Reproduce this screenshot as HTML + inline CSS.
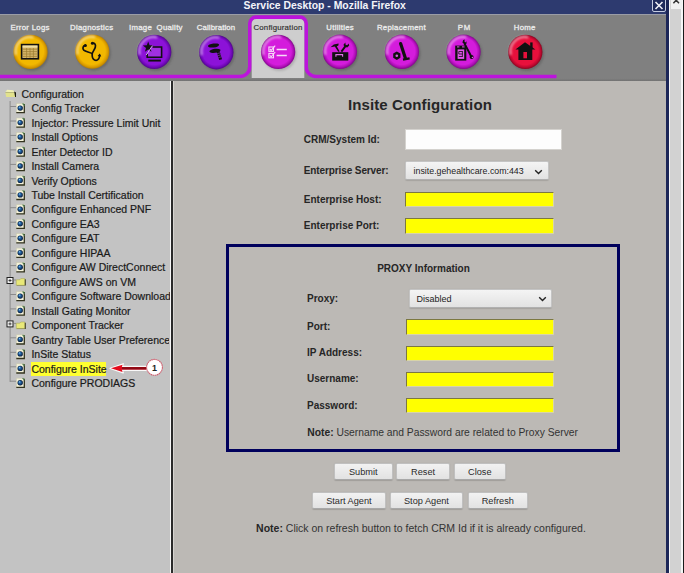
<!DOCTYPE html>
<html><head><meta charset="utf-8">
<style>
*{margin:0;padding:0;box-sizing:border-box}
html,body{width:684px;height:573px;overflow:hidden;background:#bcb9b5;font-family:"Liberation Sans",sans-serif}
.a{position:absolute}
#title{left:0;top:0;width:670px;height:14px;background:#2d3a6f}
#title span{position:absolute;left:243.6px;top:0px;font-size:10.4px;font-weight:700;color:#f4f4fa;white-space:nowrap;line-height:12px}
#xbtn{left:652px;top:-3px;width:14px;height:15px;border:1.6px solid #c4cbe0;border-radius:2px;background:#1e2a5c}
#rborder{left:666px;top:0;width:3px;height:573px;background:#1c2658}
#sb{left:669px;top:0;width:15px;height:573px;background:linear-gradient(90deg,#f6f6f6 0,#f6f6f6 1.5px,#d2d2d2 1.5px,#d2d2d2 12.5px,#f6f6f6 12.5px,#f6f6f6 14px,#1a1a1a 14px)}
#sbtop{left:670.5px;top:0;width:11px;height:9px;background:#f0f0f0}
#toolbar{left:0;top:14px;width:666px;height:67px;background:#808080}
#tbline{left:0;top:13.5px;width:666px;height:1.5px;background:#9a9ca6}
#band{left:0;top:78px;width:666px;height:3px;background:linear-gradient(#828282,#727272)}
#left{left:0;top:81px;width:170px;height:492px;background:#c3c3c3}
#sep1{left:170px;top:81px;width:1px;height:492px;background:#f6f6f6}
#sep2{left:171px;top:81px;width:2px;height:492px;background:#2a2a2a}
#sep3{left:173px;top:81px;width:1px;height:492px;background:#d6d4d0}
#main{left:174px;top:81px;width:492px;height:492px;background:#bcb9b5}
.tl{position:absolute;width:80px;text-align:center;font-size:7.8px;font-weight:400;color:#f2f2f2;white-space:nowrap;line-height:10px;letter-spacing:0.28px;-webkit-text-stroke:0.3px #e8e8e8}
.tree{position:absolute;left:31.4px;font-size:10.5px;color:#1a1a1a;white-space:nowrap;line-height:12px;-webkit-text-stroke:0.2px #1a1a1a}
.lbl{position:absolute;font-size:10px;font-weight:700;color:#262626;white-space:nowrap;line-height:12px}
.yel{position:absolute;background:#ffff00;border-top:1px solid #7c7840;border-left:1px solid #7c7840;border-bottom:1px solid #d8d4a8;border-right:1px solid #d8d4a8}
.btn{position:absolute;height:17.4px;background:linear-gradient(#f2f2f2,#e2e2e2);border:1px solid #c0c0c0;border-bottom-color:#a8a8a8;border-radius:2px;font-size:9.2px;color:#2a2a2a;text-align:center;line-height:17px;white-space:nowrap;box-shadow:0 0.5px 1px rgba(0,0,0,0.15)}
.sel{position:absolute;background:linear-gradient(#f4f4f4,#e2e2e2);border:1px solid #c4c4c4;border-bottom-color:#b0b0b0;border-radius:2px;font-size:9px;color:#222;white-space:nowrap;box-shadow:0 0.5px 1px rgba(0,0,0,0.12)}
</style></head><body>
<div class="a" id="title"><span>Service Desktop - Mozilla Firefox</span></div>
<div class="a" id="xbtn"><svg width="12" height="12" style="position:absolute;left:-0.5px;top:1px" viewBox="0 0 12 12"><path d="M2.5 3 L9.5 10 M9.5 3 L2.5 10" stroke="#f0f0f8" stroke-width="1.6"/></svg></div>
<div class="a" id="rborder"></div>
<div class="a" id="sb"></div>
<div class="a" id="sbtop"><svg width="11" height="9" viewBox="0 0 11 9" style="display:block"><path d="M2.4 3.2 L5.2 0.2 L8 3.2" fill="none" stroke="#333" stroke-width="1.5"/></svg></div>

<div class="a" id="toolbar"></div>
<div class="a" id="tbline"></div>
<div class="a" id="band"></div>

<!-- toolbar svg -->
<svg class="a" style="left:0;top:0" width="666" height="81" viewBox="0 0 666 81">
<defs>
<radialGradient id="gy" cx="0.5" cy="0.5" r="0.5" fx="0.45" fy="0.42"><stop offset="0" stop-color="#f2b800"/><stop offset="0.78" stop-color="#f2b800"/><stop offset="0.9" stop-color="#dc9e00"/><stop offset="1" stop-color="#b88000"/></radialGradient>
<radialGradient id="gp" cx="0.5" cy="0.5" r="0.5" fx="0.45" fy="0.42"><stop offset="0" stop-color="#8c12d8"/><stop offset="0.78" stop-color="#8c12d8"/><stop offset="0.9" stop-color="#7008b8"/><stop offset="1" stop-color="#50068a"/></radialGradient>
<radialGradient id="gm" cx="0.5" cy="0.5" r="0.5" fx="0.45" fy="0.42"><stop offset="0" stop-color="#d41cdc"/><stop offset="0.78" stop-color="#d41cdc"/><stop offset="0.9" stop-color="#b010b8"/><stop offset="1" stop-color="#80088a"/></radialGradient>
<radialGradient id="gr" cx="0.5" cy="0.5" r="0.5" fx="0.45" fy="0.42"><stop offset="0" stop-color="#e8103c"/><stop offset="0.78" stop-color="#e8103c"/><stop offset="0.9" stop-color="#c00830"/><stop offset="1" stop-color="#880620"/></radialGradient>
<linearGradient id="hl" x1="0" y1="0" x2="1" y2="1"><stop offset="0" stop-color="#fff" stop-opacity="0.85"/><stop offset="0.45" stop-color="#fff" stop-opacity="0"/></linearGradient>
<filter id="blur" x="-30%" y="-30%" width="160%" height="160%"><feGaussianBlur stdDeviation="1.3"/></filter>
<filter id="blur2" x="-30%" y="-30%" width="160%" height="160%"><feGaussianBlur stdDeviation="0.9"/></filter>
</defs>
<path d="M0 74.8 H240 a8 8 0 0 0 8 -8 V23.3 a8 8 0 0 1 8 -8 H300 a8 8 0 0 1 8 8 V66.8 a8 8 0 0 0 8 8 H556.5 V78.2 H316 a11.7 11.7 0 0 1 -11.7 -11.7 V23.5 a4.5 4.5 0 0 0 -4.5 -4.5 H256.2 a4.5 4.5 0 0 0 -4.5 4.5 V66.5 a11.7 11.7 0 0 1 -11.7 11.7 H0 Z" fill="#bc14dc"/>
<path d="M251.7 23.5 a4.5 4.5 0 0 1 4.5 -4.5 H299.8 a4.5 4.5 0 0 1 4.5 4.5 V78 H251.7 Z" fill="#cecece"/>
<circle cx="31.9" cy="53.5" r="17.2" fill="#5a5a5a" opacity="0.6" filter="url(#blur)"/>
<circle cx="30.5" cy="51.9" r="17.2" fill="url(#gy)"/>
<path d="M15.9 54.9 A14.6 14.6 0 0 1 33.5 37.3" fill="none" stroke="#fff" stroke-opacity="0.5" stroke-width="2.4" filter="url(#blur2)"/>
<circle cx="93.6" cy="53.2" r="17.2" fill="#5a5a5a" opacity="0.6" filter="url(#blur)"/>
<circle cx="92.2" cy="51.6" r="17.2" fill="url(#gy)"/>
<path d="M77.6 54.6 A14.6 14.6 0 0 1 95.2 37.0" fill="none" stroke="#fff" stroke-opacity="0.5" stroke-width="2.4" filter="url(#blur2)"/>
<circle cx="155.6" cy="53.5" r="17.2" fill="#5a5a5a" opacity="0.6" filter="url(#blur)"/>
<circle cx="154.2" cy="51.9" r="17.2" fill="url(#gp)"/>
<path d="M139.6 54.9 A14.6 14.6 0 0 1 157.2 37.3" fill="none" stroke="#fff" stroke-opacity="0.5" stroke-width="2.4" filter="url(#blur2)"/>
<circle cx="217.7" cy="53.8" r="17.2" fill="#5a5a5a" opacity="0.6" filter="url(#blur)"/>
<circle cx="216.3" cy="52.2" r="17.2" fill="url(#gp)"/>
<path d="M201.7 55.2 A14.6 14.6 0 0 1 219.3 37.6" fill="none" stroke="#fff" stroke-opacity="0.5" stroke-width="2.4" filter="url(#blur2)"/>
<circle cx="279.5" cy="53.5" r="17.2" fill="#9a9a9a" opacity="0.6" filter="url(#blur)"/>
<circle cx="278.1" cy="51.9" r="17.2" fill="url(#gm)"/>
<path d="M263.5 54.9 A14.6 14.6 0 0 1 281.1 37.3" fill="none" stroke="#fff" stroke-opacity="0.5" stroke-width="2.4" filter="url(#blur2)"/>
<circle cx="341.3" cy="53.4" r="17.2" fill="#5a5a5a" opacity="0.6" filter="url(#blur)"/>
<circle cx="339.9" cy="51.8" r="17.2" fill="url(#gm)"/>
<path d="M325.3 54.8 A14.6 14.6 0 0 1 342.9 37.2" fill="none" stroke="#fff" stroke-opacity="0.5" stroke-width="2.4" filter="url(#blur2)"/>
<circle cx="403.3" cy="53.4" r="17.2" fill="#5a5a5a" opacity="0.6" filter="url(#blur)"/>
<circle cx="401.9" cy="51.8" r="17.2" fill="url(#gm)"/>
<path d="M387.3 54.8 A14.6 14.6 0 0 1 404.9 37.2" fill="none" stroke="#fff" stroke-opacity="0.5" stroke-width="2.4" filter="url(#blur2)"/>
<circle cx="464.9" cy="53.4" r="17.2" fill="#5a5a5a" opacity="0.6" filter="url(#blur)"/>
<circle cx="463.5" cy="51.8" r="17.2" fill="url(#gm)"/>
<path d="M448.9 54.8 A14.6 14.6 0 0 1 466.5 37.2" fill="none" stroke="#fff" stroke-opacity="0.5" stroke-width="2.4" filter="url(#blur2)"/>
<circle cx="526.7" cy="53.5" r="17.2" fill="#5a5a5a" opacity="0.6" filter="url(#blur)"/>
<circle cx="525.3" cy="51.9" r="17.2" fill="url(#gr)"/>
<path d="M510.7 54.9 A14.6 14.6 0 0 1 528.3 37.3" fill="none" stroke="#fff" stroke-opacity="0.5" stroke-width="2.4" filter="url(#blur2)"/>
<!-- error logs -->
<rect x="21.6" y="44.6" width="16.8" height="14.2" fill="#d4b468" stroke="#111" stroke-width="1.6"/>
<rect x="22.6" y="45.6" width="14.8" height="2" fill="#eedfa8"/>
<path d="M23 49.2H37M23 51.6H37M23 54H37M23 56.4H37M26.6 48V58M30 48V58M33.4 48V58" stroke="#9c7c30" stroke-width="0.7"/>
<!-- diagnostics stethoscope -->
<path d="M85.3 45.3 C83 45.6 82.2 48.6 83.8 50.2 C85.6 51.8 89.6 52 92.2 53.6" fill="none" stroke="#111" stroke-width="1.7" stroke-linecap="round"/>
<path d="M92.4 43.2 C94.6 42.8 96 44.4 95.3 47.2 C94.7 49.6 92.6 51.6 92.2 53.6 C92 56.2 92.4 59 94.6 60 C96.6 61 98.8 59.6 99.3 57.2 L99.6 55.4" fill="none" stroke="#111" stroke-width="1.7" stroke-linecap="round"/>
<circle cx="85.4" cy="45.4" r="1.5" fill="#111"/><circle cx="92.4" cy="43.2" r="1.5" fill="#111"/>
<path d="M97.6 56 L99.8 53.6 L101.2 56.4 Z" fill="#111"/>
<!-- image quality -->
<rect x="148" y="47.8" width="13.2" height="8.8" fill="#a030e0"/>
<path d="M152.6 47 H161.6 V57.2 H147.2 V53.8" fill="none" stroke="#111" stroke-width="1.6"/>
<path d="M148.20 41.60 L149.55 45.34 L153.53 45.47 L150.39 47.91 L151.49 51.73 L148.20 49.50 L144.91 51.73 L146.01 47.91 L142.87 45.47 L146.85 45.34 Z" fill="#111"/>
<path d="M152.5 45.6 L146.2 55" stroke="#dcb8f4" stroke-width="0.9"/>
<path d="M148.3 60.6 H160.9" stroke="#111" stroke-width="1.9"/>
<!-- calibration screw -->
<ellipse cx="213.6" cy="45.5" rx="5.6" ry="2" fill="#111" transform="rotate(-7 213.6 45.5)"/>
<ellipse cx="215" cy="50.8" rx="5.6" ry="2" fill="#111" transform="rotate(-7 215 50.8)"/>
<path d="M218.2 51.5 L220.6 59.6" stroke="#111" stroke-width="3"/>
<path d="M217.3 53.6 L220.3 52.8 M217.9 55.6 L220.9 54.8 M218.5 57.6 L221.5 56.8" stroke="#9a30dc" stroke-width="0.6"/>
<!-- configuration checklist -->
<g stroke="#f6dcf8" fill="none" stroke-width="1.1">
<rect x="268.9" y="47" width="4.6" height="4.4"/>
<rect x="268.9" y="53.4" width="4.6" height="4.4"/>
<path d="M269.8 49 L271.2 50.4 L275.2 45.6"/><path d="M269.8 55.4 L271.2 56.8 L275.2 52"/>
</g>
<path d="M276.6 49.5 H286.8 M276.6 55.5 H286.8" stroke="#f6dcf8" stroke-width="1.6"/>
<!-- utilities toolbox -->
<rect x="332.2" y="52.2" width="16.1" height="8.4" fill="#111"/>
<path d="M335.9 56.8 V54.6 H342.6 V56.8" fill="none" stroke="#e070e8" stroke-width="1.1"/>
<path d="M330.5 47.2 L333.8 44.6 L338.6 43.6 L338.4 45.4 L336.8 46.2 L339.6 51.6 L338.2 51.8 L334.8 46.6 Z" fill="#111"/>
<path d="M341.4 51.6 L345.6 46" stroke="#111" stroke-width="2"/>
<path d="M344 46.6 L343.6 44.4 L345.4 42.6 L345.6 44.8 L347.2 45.2 L348.6 43.4 L349.2 45.4 L347.2 47.6 Z" fill="#111"/>
<!-- replacement -->
<path d="M396.8 51.6 L400.4 53.6 V57.8 L396.8 59.9 L393.2 57.8 V53.6 Z" fill="#111"/>
<circle cx="396.8" cy="55.7" r="1.3" fill="#e060e8"/>
<path d="M400.6 43.6 L405.4 58.2" stroke="#111" stroke-width="3.2" stroke-linecap="round"/>
<path d="M403 59.6 L409.6 58.4" stroke="#111" stroke-width="2.2"/>
<!-- PM -->
<rect x="455.2" y="45.6" width="11.1" height="15" fill="#111"/>
<rect x="457.6" y="49.4" width="6.6" height="9.5" fill="#e458ec"/>
<rect x="457" y="46.4" width="2.4" height="1" fill="#e458ec"/><rect x="462" y="46.4" width="2.6" height="1" fill="#e458ec"/>
<path d="M458.8 51.5h4M462.4 51.5v5M458.8 54h3.6M458.8 51.5v2.5M458.8 56.5h4" stroke="#111" stroke-width="0.8" fill="none"/>
<path d="M464.4 43.4 L471 56" stroke="#111" stroke-width="2"/>
<path d="M462.4 42.4 L463.2 40 L464.8 39.6 L464.4 41.6 L465.8 42.4 L466.4 41 L466.6 43.6 L464.8 44.6 Z" fill="#111"/>
<circle cx="471.6" cy="57" r="2" fill="#111"/><circle cx="472.4" cy="57.4" r="0.7" fill="#e458ec"/>
<!-- home -->
<path d="M525 42.2 L535.4 49.6 H532.3 V59.9 H518.4 V49.6 H515.4 Z" fill="#111"/>
<rect x="530.2" y="42.4" width="2.4" height="5.6" fill="#111"/>
<rect x="523.4" y="52" width="3.6" height="6.3" fill="#e8103c"/>
</svg>

<!-- toolbar labels -->
<div class="tl" style="left:-9.9px;top:23.2px;">Error Logs</div>
<div class="tl" style="left:51.7px;top:23.2px;">Diagnostics</div>
<div class="tl" style="left:115.9px;top:23.2px;word-spacing:2px;">Image Quality</div>
<div class="tl" style="left:176.0px;top:23.2px;letter-spacing:0.1px;">Calibration</div>
<div class="tl" style="left:238.0px;top:23.2px;color:#2e2e2e;font-weight:400;letter-spacing:0.2px;-webkit-text-stroke:0.15px #2e2e2e;">Configuration</div>
<div class="tl" style="left:300.2px;top:23.2px;">Utilities</div>
<div class="tl" style="left:361.4px;top:23.2px;">Replacement</div>
<div class="tl" style="left:424.4px;top:23.2px;letter-spacing:0.8px;">PM</div>
<div class="tl" style="left:484.7px;top:23.2px;">Home</div>

<div class="a" id="left"></div>
<div class="a" id="sep1"></div>
<div class="a" id="sep2"></div>
<div class="a" id="sep3"></div>
<div class="a" id="main"></div>

<!-- tree -->
<svg class="a" style="left:0;top:81px" width="170" height="320" viewBox="0 81 170 320">
<defs>
<radialGradient id="bs" cx="0.5" cy="0.5" r="0.5" fx="0.35" fy="0.3"><stop offset="0" stop-color="#8cc8f0"/><stop offset="0.4" stop-color="#2466a8"/><stop offset="1" stop-color="#051838"/></radialGradient>
<g id="doc"><rect x="0.3" y="0.3" width="8" height="9.2" fill="#f4f2da" stroke="#c8c8b0" stroke-width="0.6"/><path d="M8.3 0.8 V9.5 H0.3" fill="none" stroke="#33331f" stroke-width="1.3"/><path d="M6.6 0.3 L8.6 2.3" stroke="#4a7a4a" stroke-width="1.1"/><circle cx="4.2" cy="4.9" r="2.7" fill="url(#bs)"/></g>
<g id="fold"><path d="M0.5 2 H4 L5 0.8 H9 V7.5 H0.5 Z" fill="#e8e878" stroke="#a0a050" stroke-width="0.5"/><path d="M9 1.5 H10 V7.8 H1 V7.5 H9 Z" fill="#404020"/></g>
<g id="plus"><rect x="0.5" y="0.5" width="6" height="6" fill="#f0f0f0" stroke="#202020" stroke-width="1"/><path d="M2 3.5 H5 M3.5 2 V5" stroke="#202020" stroke-width="0.8"/></g>
</defs>
<!-- open folder -->
<path d="M5.4 91.8 L7.2 89.8 L13.2 90.2 L14.6 92.2 Z" fill="#f2f2b4"/>
<path d="M5.4 92.2 H14.6 V93 H5.4 Z" fill="#b8b868"/>
<path d="M5.4 93 H14.4 L15.2 97.1 H6.2 Z" fill="#e2e28c"/>
<path d="M14.2 91.6 L16 92.4 V97.1 H15.1 Z" fill="#1c1c0c"/>
<path d="M10.1 101 V381.9" stroke="#8a8a8a" stroke-width="1"/>
<g stroke="#8a8a8a" stroke-width="1">
<path d="M10 106.5H16"/><path d="M10 121H16"/><path d="M10 135.4H16"/><path d="M10 149.9H16"/><path d="M10 164.4H16"/><path d="M10 178.8H16"/><path d="M10 193.3H16"/><path d="M10 207.7H16"/><path d="M10 222.2H16"/><path d="M10 236.6H16"/><path d="M10 251.1H16"/><path d="M10 265.6H16"/><path d="M14 280H16"/><path d="M10 294.5H16"/><path d="M10 308.9H16"/><path d="M14 323.4H16"/><path d="M10 337.8H16"/><path d="M10 352.3H16"/><path d="M10 366.8H16"/><path d="M10 381.2H16"/>
</g>
<use href="#doc" x="16" y="103.2"/>
<use href="#doc" x="16" y="117.7"/>
<use href="#doc" x="16" y="132.1"/>
<use href="#doc" x="16" y="146.6"/>
<use href="#doc" x="16" y="161.1"/>
<use href="#doc" x="16" y="175.5"/>
<use href="#doc" x="16" y="190"/>
<use href="#doc" x="16" y="204.4"/>
<use href="#doc" x="16" y="218.9"/>
<use href="#doc" x="16" y="233.3"/>
<use href="#doc" x="16" y="247.8"/>
<use href="#doc" x="16" y="262.3"/>
<use href="#plus" x="6.5" y="277"/>
<use href="#fold" x="15.8" y="277.8"/>
<use href="#doc" x="16" y="291.2"/>
<use href="#doc" x="16" y="305.6"/>
<use href="#plus" x="6.5" y="320.4"/>
<use href="#fold" x="15.8" y="321.2"/>
<use href="#doc" x="16" y="334.5"/>
<use href="#doc" x="16" y="349"/>
<use href="#doc" x="16" y="363.5"/>
<use href="#doc" x="16" y="377.9"/>
</svg>
<div class="tree" style="left:21.5px;top:88.1px">Configuration</div>
<div class="tree" style="top:102.2px">Config Tracker</div>
<div class="tree" style="top:116.7px">Injector: Pressure Limit Unit</div>
<div class="tree" style="top:131.1px">Install Options</div>
<div class="tree" style="top:145.6px">Enter Detector ID</div>
<div class="tree" style="top:160.1px">Install Camera</div>
<div class="tree" style="top:174.5px">Verify Options</div>
<div class="tree" style="top:189.0px">Tube Install Certification</div>
<div class="tree" style="top:203.4px">Configure Enhanced PNF</div>
<div class="tree" style="top:217.9px">Configure EA3</div>
<div class="tree" style="top:232.3px">Configure EAT</div>
<div class="tree" style="top:246.8px">Configure HIPAA</div>
<div class="tree" style="top:261.3px">Configure AW DirectConnect</div>
<div class="tree" style="top:275.7px">Configure AWS on VM</div>
<div class="tree" style="top:290.2px;width:139px;overflow:hidden">Configure Software Download</div>
<div class="tree" style="top:304.6px">Install Gating Monitor</div>
<div class="tree" style="top:319.1px">Component Tracker</div>
<div class="tree" style="top:333.5px;width:138px;overflow:hidden">Gantry Table User Preferences</div>
<div class="tree" style="top:348.0px">InSite Status</div>
<div class="a" style="left:31.4px;top:361.5px;width:74.7px;height:14.6px;background:#ffff30"></div>
<div class="tree" style="top:362.5px">Configure InSite</div>
<div class="tree" style="top:376.9px">Configure PRODIAGS</div>

<!-- arrow and callout -->
<svg class="a" style="left:100px;top:355px" width="70" height="30" viewBox="100 355 70 30">
<path d="M110.2 368.3 L123.2 363.8 L122.2 366.4 H147 V370.2 H122.2 L123.2 372.8 Z" fill="#fff" stroke="#fff" stroke-width="1.4" stroke-linejoin="round" opacity="0.9"/>
<path d="M111 368.3 L122.6 364.7 L121.8 367.1 H146.5 V369.5 H121.8 L122.6 371.9 Z" fill="#e40a1c"/>
<rect x="122" y="367.1" width="24.5" height="2.4" fill="#8c0a16"/>
<circle cx="154.5" cy="367.3" r="7.9" fill="#fff" stroke="#d06070" stroke-width="1.1" stroke-dasharray="1.6 0.5"/>
<text x="154.6" y="370.6" font-size="9" font-weight="700" font-family="Liberation Sans" text-anchor="middle" fill="#222">1</text>
</svg>

<!-- main content -->
<div class="a" style="left:347.9px;top:95.5px;font-size:15px;font-weight:700;color:#262626;white-space:nowrap;line-height:18px;letter-spacing:0.12px">Insite Configuration</div>

<div class="lbl" style="left:303.8px;top:133.9px">CRM/System Id:</div>
<div class="a" style="left:405px;top:128.8px;width:156.5px;height:20.8px;background:#fdfdfd;border:1px solid #d4d2ce"></div>
<div class="lbl" style="left:303.8px;top:165.1px;letter-spacing:-0.11px">Enterprise Server:</div>
<div class="sel" style="left:405px;top:161.4px;width:144.2px;height:18.6px"><span style="position:absolute;left:7.6px;top:3.6px;font-size:8.8px">insite.gehealthcare.com:443</span><svg style="position:absolute;left:128px;top:6.4px" width="9" height="6" viewBox="0 0 9 6"><path d="M1.2 1.2 L4.5 4.5 L7.8 1.2" fill="none" stroke="#222" stroke-width="1.4"/></svg></div>
<div class="lbl" style="left:303.8px;top:193.7px">Enterprise Host:</div>
<div class="yel" style="left:405px;top:191.5px;width:148.8px;height:15.6px"></div>
<div class="lbl" style="left:303.8px;top:219.8px">Enterprise Port:</div>
<div class="yel" style="left:405px;top:218.1px;width:148.8px;height:15.6px"></div>

<!-- proxy box -->
<div class="a" style="left:226px;top:244px;width:394.3px;height:207.7px;border:3.3px solid #00005c"></div>
<div class="lbl" style="left:377.2px;top:262.9px">PROXY Information</div>
<div class="lbl" style="left:307px;top:292.8px">Proxy:</div>
<div class="sel" style="left:409px;top:289.2px;width:142.8px;height:18.6px"><span style="position:absolute;left:6.6px;top:3.5px">Disabled</span><svg style="position:absolute;left:127.6px;top:6px" width="9" height="6" viewBox="0 0 9 6"><path d="M1.2 1.2 L4.5 4.5 L7.8 1.2" fill="none" stroke="#222" stroke-width="1.4"/></svg></div>
<div class="lbl" style="left:307px;top:320.8px">Port:</div>
<div class="yel" style="left:406px;top:319.4px;width:148px;height:15.2px"></div>
<div class="lbl" style="left:307px;top:346.9px">IP Address:</div>
<div class="yel" style="left:406px;top:345.7px;width:148px;height:15.2px"></div>
<div class="lbl" style="left:307px;top:373.2px">Username:</div>
<div class="yel" style="left:406px;top:371.9px;width:148px;height:15.2px"></div>
<div class="lbl" style="left:307px;top:399.6px">Password:</div>
<div class="yel" style="left:406px;top:398.3px;width:148px;height:15.2px"></div>
<div class="a" style="left:307.3px;top:426.6px;font-size:10.3px;color:#333;white-space:nowrap;line-height:12px"><b style="color:#262626">Note:</b> Username and Password are related to Proxy Server</div>

<!-- buttons -->
<div class="btn" style="left:333.8px;top:463px;width:58.8px">Submit</div>
<div class="btn" style="left:396.3px;top:463px;width:53.6px">Reset</div>
<div class="btn" style="left:453.7px;top:463px;width:52.3px">Close</div>
<div class="btn" style="left:312px;top:492px;width:73.8px">Start Agent</div>
<div class="btn" style="left:390.1px;top:492px;width:72.7px">Stop Agent</div>
<div class="btn" style="left:467.5px;top:492px;width:60.6px">Refresh</div>

<div class="a" style="left:256.1px;top:521.8px;font-size:10.5px;color:#333;white-space:nowrap;line-height:12px"><b style="color:#262626">Note:</b> Click on refresh button to fetch CRM Id if it is already configured.</div>
</body></html>
